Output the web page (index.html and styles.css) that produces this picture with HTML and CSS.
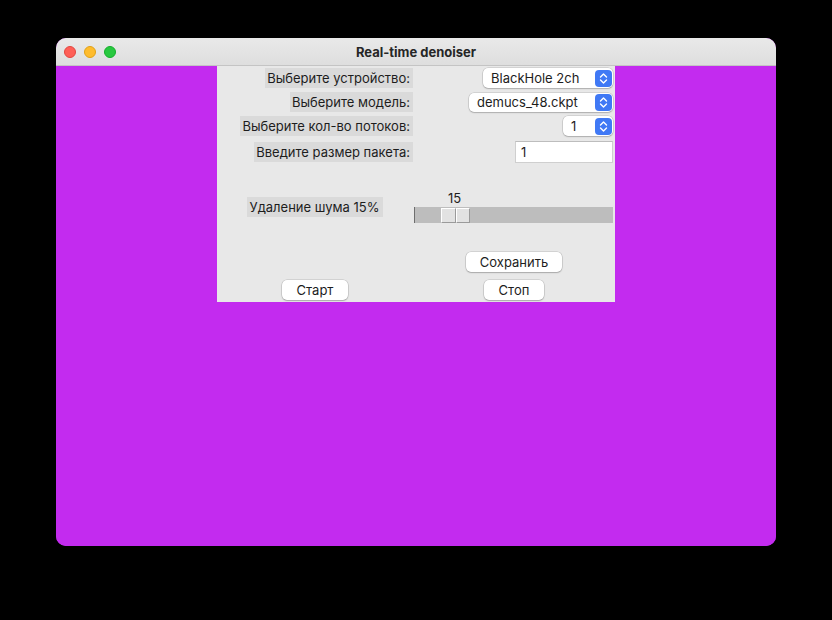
FILE: index.html
```html
<!DOCTYPE html>
<html lang="ru">
<head>
<meta charset="utf-8">
<title>Real-time denoiser</title>
<link rel="stylesheet" href="styles.css">
</head>
<body>
<div class="window">
  <div class="titlebar">
    <div class="lights">
      <span class="light red"></span>
      <span class="light yellow"></span>
      <span class="light green"></span>
    </div>
    <div class="title">Real-time denoiser</div>
  </div>
  <div class="content">
    <div class="panel">
      <div class="cell c0 r1"><span class="label">Выберите устройство:</span></div>
      <div class="cell c1 r1">
        <div class="popup w1"><span class="popup-text">BlackHole 2ch</span>
          <svg class="arrows" width="17" height="17" viewBox="0 0 17 17"><rect x="0" y="0" width="17" height="17" rx="4" fill="#4079f5"/><path d="M5.5 7 L8.5 4 L11.5 7 M5.5 10 L8.5 13 L11.5 10" fill="none" stroke="#fff" stroke-width="1.4" stroke-linecap="round" stroke-linejoin="round"/></svg>
        </div>
      </div>

      <div class="cell c0 r2"><span class="label">Выберите модель:</span></div>
      <div class="cell c1 r2">
        <div class="popup w2"><span class="popup-text">demucs_48.ckpt</span>
          <svg class="arrows" width="17" height="17" viewBox="0 0 17 17"><rect x="0" y="0" width="17" height="17" rx="4" fill="#4079f5"/><path d="M5.5 7 L8.5 4 L11.5 7 M5.5 10 L8.5 13 L11.5 10" fill="none" stroke="#fff" stroke-width="1.4" stroke-linecap="round" stroke-linejoin="round"/></svg>
        </div>
      </div>

      <div class="cell c0 r3"><span class="label">Выберите кол-во потоков:</span></div>
      <div class="cell c1 r3">
        <div class="popup w3"><span class="popup-text">1</span>
          <svg class="arrows" width="17" height="17" viewBox="0 0 17 17"><rect x="0" y="0" width="17" height="17" rx="4" fill="#4079f5"/><path d="M5.5 7 L8.5 4 L11.5 7 M5.5 10 L8.5 13 L11.5 10" fill="none" stroke="#fff" stroke-width="1.4" stroke-linecap="round" stroke-linejoin="round"/></svg>
        </div>
      </div>

      <div class="cell c0 r4"><span class="label">Введите размер пакета:</span></div>
      <div class="cell c1 r4"><div class="entry">1</div></div>

      <div class="cell c0 r5 center"><span class="label">Удаление шума 15%</span></div>
      <div class="cell c1 r5 slider-cell">
        <div class="slider">
          <div class="slider-value">15</div>
          <div class="trough">
            <div class="handle"><span class="half"></span><span class="half"></span></div>
          </div>
        </div>
      </div>

      <div class="cell c1 r6 center"><button class="btn w-save">Сохранить</button></div>

      <div class="cell c0 r7 center"><button class="btn w-start">Старт</button></div>
      <div class="cell c1 r7 center"><button class="btn w-stop">Стоп</button></div>
    </div>
  </div>
</div>
</body>
</html>
```
FILE: styles.css
```css
* { box-sizing: border-box; }
html, body { margin: 0; padding: 0; }
body {
  background: #000;
  width: 832px;
  height: 620px;
  padding: 38px 56px 0 56px;
  font-family: "Inter", "Liberation Sans", sans-serif;
  font-size: 13px;
  color: #1d1d1d;
}
.window {
  width: 720px;
  height: 508px;
  border-radius: 10px;
  overflow: hidden;
  display: flex;
  flex-direction: column;
  background: #c32bef;
}
.titlebar {
  height: 28px;
  flex: none;
  background: linear-gradient(#e9e9e9, #dedede);
  border-bottom: 1px solid #c4c4c4;
  display: flex;
  align-items: center;
  position: relative;
}
.lights {
  display: flex;
  gap: 8px;
  padding-left: 8px;
}
.light {
  width: 12px;
  height: 12px;
  border-radius: 50%;
  display: block;
}
.red { background: #fe5f57; border: 0.5px solid #e2463f; }
.yellow { background: #febc2e; border: 0.5px solid #e1a116; }
.green { background: #28c840; border: 0.5px solid #14ae2a; }
.title {
  position: absolute;
  left: 0; right: 0; top: 0; bottom: 0;
  display: flex;
  align-items: center;
  justify-content: center;
  font-weight: 700;
  font-size: 13px;
  color: #262626;
}
.content {
  flex: 1;
  background: #c32bef;
  padding-left: 161px;
}
.panel {
  width: 398px;
  height: 236px;
  background: #e8e8e8;
  display: grid;
  grid-template-columns: 196px 202px;
  grid-template-rows: 24px 24px 24px 28px 22px 38px 24px 24px 4px 24px;
}
.cell {
  display: flex;
  align-items: center;
  justify-content: flex-end;
}
.c0 { grid-column: 1; }
.c1 { grid-column: 2; padding-right: 2px; }
.r1 { grid-row: 1; }
.r2 { grid-row: 2; }
.r3 { grid-row: 3; }
.r4 { grid-row: 4; }
.r5 { grid-row: 6; }
.r6 { grid-row: 8; }
.r7 { grid-row: 10; }
.center { justify-content: center; padding-right: 0; }
.label {
  background: #dadada;
  height: 20px;
  line-height: 20px;
  padding: 0 3px 0 2px;
  white-space: nowrap;
}
.r5 .label { margin-top: 0; }
.popup {
  height: 20px;
  background: #fff;
  border-radius: 5px;
  box-shadow: 0 0 0 0.5px rgba(0,0,0,0.18), 0 1px 1.5px rgba(0,0,0,0.18);
  display: flex;
  align-items: center;
  justify-content: space-between;
  padding: 0 1.5px 0 8px;
}
.w1 { width: 130px; }
.w2 { width: 144px; height: 19px; }
.w3 { width: 50px; }
.popup-text { white-space: nowrap; }
.arrows { display: block; flex: none; }
.entry {
  width: 98px;
  height: 22px;
  background: #fff;
  border: 1px solid #cfcfcf;
  border-top-color: #bdbdbd;
  padding-left: 5px;
  line-height: 20px;
}
.slider-cell { align-items: flex-start; padding-top: 2px; }
.slider {
  width: 199px;
  display: flex;
  flex-direction: column;
}
.slider-value {
  height: 17px;
  line-height: 16px;
  padding-left: 34px;
}
.trough {
  height: 16px;
  background: #bdbdbd;
  border-left: 1px solid #6e6e6e;
  display: flex;
  align-items: center;
  padding-left: 26px;
}
.handle {
  display: flex;
  height: 15px;
  width: 29px;
}
.half {
  flex: 1;
  background: #e2e2e2;
  border-top: 1px solid #fff;
  border-left: 1px solid #fff;
  border-right: 1px solid #9a9a9a;
  border-bottom: 1px solid #9a9a9a;
}
.btn {
  font-family: inherit;
  font-size: 13px;
  color: #1d1d1d;
  background: #fff;
  border: none;
  border-radius: 5px;
  height: 20px;
  padding: 0;
  box-shadow: 0 0 0 0.5px rgba(0,0,0,0.18), 0 1px 1.5px rgba(0,0,0,0.2);
}
.w-save { width: 96px; }
.w-start { width: 66px; }
.w-stop { width: 60px; }
```
